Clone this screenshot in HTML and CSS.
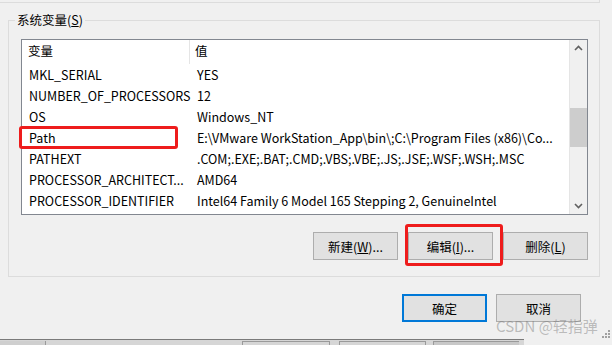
FILE: index.html
```html
<!DOCTYPE html>
<html lang="zh-CN">
<head>
  <meta charset="UTF-8" />
  <title>环境变量</title>
  <link rel="stylesheet" href="styles.css">
</head>
<body>

  <!-- 上一个分组框的底边 -->
  <div class="prev-group"></div>

  <div class="group">
    <div class="group-title">系统变量(<u>S</u>)</div>

    <div class="list">
      <div class="table">
        <div class="row head">
          <div class="cell name">变量</div>
          <div class="cell value">值</div>
        </div>
        <div class="row"><div class="cell name">MKL_SERIAL</div><div class="cell value">YES</div></div>
        <div class="row"><div class="cell name">NUMBER_OF_PROCESSORS</div><div class="cell value">12</div></div>
        <div class="row"><div class="cell name">OS</div><div class="cell value">Windows_NT</div></div>
        <div class="row"><div class="cell name">Path</div><div class="cell value">E:\VMware WorkStation_App\bin\;C:\Program Files (x86)\Co...</div></div>
        <div class="row"><div class="cell name">PATHEXT</div><div class="cell value">.COM;.EXE;.BAT;.CMD;.VBS;.VBE;.JS;.JSE;.WSF;.WSH;.MSC</div></div>
        <div class="row"><div class="cell name">PROCESSOR_ARCHITECT...</div><div class="cell value">AMD64</div></div>
        <div class="row"><div class="cell name">PROCESSOR_IDENTIFIER</div><div class="cell value">Intel64 Family 6 Model 165 Stepping 2, GenuineIntel</div></div>
      </div>
      <div class="scrollbar">
        <svg class="arrow" width="17" height="17" viewBox="0 0 17 17"><path d="M5 10 L8.5 6.5 L12 10" fill="none" stroke="#606060" stroke-width="1.6"/></svg>
        <div class="track"><div class="thumb"></div></div>
        <svg class="arrow" width="17" height="17" viewBox="0 0 17 17"><path d="M5 7 L8.5 10.5 L12 7" fill="none" stroke="#606060" stroke-width="1.6"/></svg>
      </div>
    </div>

    <div class="actions">
      <button class="btn">新建(<u>W</u>)...</button>
      <button class="btn">编辑(<u>I</u>)...</button>
      <button class="btn">删除(<u>L</u>)</button>
    </div>
  </div>

  <div class="footer">
    <button class="btn default">确定</button>
    <button class="btn">取消</button>
  </div>

  <!-- 下方任务栏一角 -->
  <div class="taskbar">
    <div class="tb-item first"></div>
    <div class="tb-item second"></div>
    <div class="tb-item third"></div>
    <div class="tb-item fourth"></div>
    <div class="tb-item fifth"></div>
  </div>

  <!-- 标注框 -->
  <div class="mark mark-path"></div>
  <div class="mark mark-edit"></div>

  <div class="watermark">CSDN @轻指弹</div>
  <svg class="grip" width="8" height="8" viewBox="0 0 8 8">
    <rect x="6" y="0" width="2" height="2" fill="#a0a0a0"/>
    <rect x="3" y="3" width="2" height="2" fill="#a0a0a0"/>
    <rect x="6" y="3" width="2" height="2" fill="#a0a0a0"/>
    <rect x="0" y="6" width="2" height="2" fill="#a0a0a0"/>
    <rect x="3" y="6" width="2" height="2" fill="#a0a0a0"/>
    <rect x="6" y="6" width="2" height="2" fill="#a0a0a0"/>
  </svg>

</body>
</html>
```

FILE: styles.css
```css
body {
  margin: 0;
  width: 612px;
  height: 345px;
  overflow: hidden;
  background-color: #f0f0f0;
  font-family: "Noto Sans CJK SC", "Noto Sans", sans-serif;
  font-size: 12px;
  color: #000;
  position: relative;
}

.prev-group {
  width: 599px;
  height: 2px;
  border-right: 1px solid #dcdcdc;
  border-bottom: 1px solid #dcdcdc;
}

.group {
  margin: 17px 0 0 8px;
  width: 590px;
  height: 255px;
  border: 1px solid #dcdcdc;
}

.group-title {
  display: table;
  margin: -9px 0 0 6px;
  padding: 0 2px;
  line-height: 16px;
  font-size: 12.5px;
  background-color: #f0f0f0;
}

.list {
  display: flex;
  margin: 11px 0 0 12px;
  width: 565px;
  height: 174px;
  border: 1px solid #828790;
  background-color: #fff;
  overflow: hidden;
  font-size: 12.5px;
}

.table {
  flex: 1;
  border-right: 1px solid #e5e5e5;
}

.row {
  display: flex;
  height: 21px;
  line-height: 21px;
  white-space: nowrap;
}

.row.head {
  height: 24px;
  line-height: 22px;
}

.cell.name {
  width: 162px;
  padding-left: 7px;
}

.cell.value {
  padding-left: 6px;
}

.head .cell.name {
  border-right: 1px solid #e5e5e5;
  width: 161px;
  padding-left: 6px;
}

.head .cell.value {
  padding-left: 5px;
}

.scrollbar {
  width: 17px;
  display: flex;
  flex-direction: column;
  background-color: #f0f0f0;
}

.arrow {
  display: block;
  flex: none;
}

.track {
  flex: 1;
}

.thumb {
  margin-top: 51px;
  height: 39px;
  background-color: #cdcdcd;
}

.btn {
  width: 85px;
  height: 28px;
  padding: 0;
  border: 1px solid #adadad;
  background-color: #e1e1e1;
  font-family: inherit;
  font-size: 12.5px;
  color: #000;
}

.actions {
  display: flex;
  justify-content: flex-end;
  gap: 10px;
  margin: 17px 11px 0 0;
}

.footer {
  display: flex;
  justify-content: flex-end;
  gap: 9px;
  margin: 17px 31px 0 0;
}

.btn.default {
  border: 2px solid #0078d7;
}

.taskbar {
  display: flex;
  margin-top: 17px;
  width: 524px;
  height: 6px;
  border-top: 1px solid #7a7a7a;
  background-color: #d6d6d6;
}

.tb-item {
  height: 5px;
  margin-top: 1px;
  border-left: 1px solid #9a9a9a;
  border-top: 1px solid #9a9a9a;
}

.tb-item.first {
  width: 45px;
  border: none;
  background-color: #cfcfcf;
}

.tb-item.second {
  width: 196px;
  border-top: none;
}

.tb-item.third {
  width: 86px;
  margin-right: 9px;
  border-right: 1px solid #9a9a9a;
}

.tb-item.fourth {
  width: 85px;
  margin-right: 7px;
  border-right: 1px solid #9a9a9a;
}

.tb-item.fifth {
  width: 85px;
  background-color: #c8c8c8;
}

.mark {
  position: absolute;
  border: 3px solid #ee1c1c;
  border-radius: 3px;
}

.mark-path {
  left: 19px;
  top: 126px;
  width: 153px;
  height: 17px;
}

.mark-edit {
  left: 405px;
  top: 224px;
  width: 92px;
  height: 36px;
}

.watermark {
  position: absolute;
  left: 496px;
  top: 316px;
  font-size: 15px;
  line-height: 20px;
  color: rgba(120, 120, 120, 0.45);
}

.grip {
  position: absolute;
  left: 602px;
  top: 330px;
}
```
